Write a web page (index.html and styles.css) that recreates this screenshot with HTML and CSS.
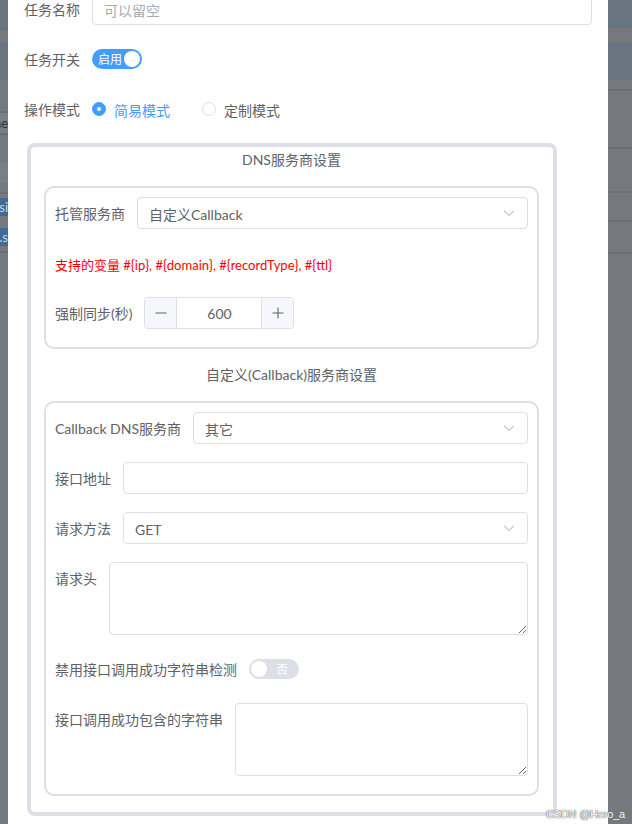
FILE: index.html
```html
<!DOCTYPE html>
<html lang="zh-CN">
<head>
<meta charset="utf-8">
<title>任务设置</title>
<link rel="stylesheet" href="styles.css">
</head>
<body>
<div class="screen">
  <div class="edge edge-left">
    <div class="band band-blue h28"></div>
    <div class="band band-line h2"></div>
    <div class="band band-gray h12"></div>
    <div class="band band-blue h38"></div>
    <div class="band band-gray h31"></div>
    <div class="band band-line h2"></div>
    <div class="band band-light h20"><span class="edge-text dark">ne</span></div>
    <div class="band band-line h2"></div>
    <div class="band band-gray h28"></div>
    <div class="band band-light h20"></div>
    <div class="band band-gray h9"></div>
    <div class="band band-line h2"></div>
    <div class="band band-gray h4"></div>
    <div class="band band-sel h18"><span class="edge-text">si</span></div>
    <div class="band band-gray h12"></div>
    <div class="band band-sel h18"><span class="edge-text">l.s</span></div>
    <div class="band band-gray h5"></div>
    <div class="band band-line h2"></div>
  </div>

  <div class="dialog">
    <div class="dialog-body">
      <div class="form top-form">
        <div class="item">
          <span class="label">任务名称</span>
          <div class="control">
            <input class="input" type="text" placeholder="可以留空">
          </div>
        </div>
        <div class="item">
          <span class="label">任务开关</span>
          <div class="control">
            <span class="switch is-on"><span class="switch-text">启用</span><span class="switch-knob"></span></span>
          </div>
        </div>
        <div class="item">
          <span class="label">操作模式</span>
          <div class="control">
            <span class="radio is-checked"><span class="radio-dot"></span><span class="radio-label">简易模式</span></span>
            <span class="radio"><span class="radio-dot"></span><span class="radio-label">定制模式</span></span>
          </div>
        </div>
      </div>

      <div class="group">
        <div class="group-title">DNS服务商设置</div>
        <div class="card">
          <div class="item">
            <span class="label">托管服务商</span>
            <div class="control">
              <div class="select"><span class="select-value">自定义Callback</span>
                <svg class="arrow" viewBox="0 0 1024 1024"><path fill="currentColor" d="M831.872 340.864 512 652.672 192.128 340.864a30.592 30.592 0 0 0-42.752 0 29.120 29.120 0 0 0 0 41.600L489.664 714.240a32 32 0 0 0 44.672 0l340.288-331.712a29.120 29.120 0 0 0 0-41.728 30.592 30.592 0 0 0-42.752 0z"/></svg>
              </div>
            </div>
          </div>
          <div class="item">
            <div class="control hint">支持的变量 #{ip}, #{domain}, #{recordType}, #{ttl}</div>
          </div>
          <div class="item">
            <span class="label">强制同步(秒)</span>
            <div class="control">
              <div class="number">
                <span class="num-btn num-dec"><svg viewBox="0 0 12 12"><path d="M0.5 6h11" stroke="currentColor" stroke-width="1.1"/></svg></span>
                <span class="num-value">600</span>
                <span class="num-btn num-inc"><svg viewBox="0 0 12 12"><path d="M0.5 6h11M6 0.5v11" stroke="currentColor" stroke-width="1.1"/></svg></span>
              </div>
            </div>
          </div>
        </div>

        <div class="group-title">自定义(Callback)服务商设置</div>
        <div class="card">
          <div class="item">
            <span class="label">Callback DNS服务商</span>
            <div class="control">
              <div class="select"><span class="select-value">其它</span>
                <svg class="arrow" viewBox="0 0 1024 1024"><path fill="currentColor" d="M831.872 340.864 512 652.672 192.128 340.864a30.592 30.592 0 0 0-42.752 0 29.120 29.120 0 0 0 0 41.600L489.664 714.240a32 32 0 0 0 44.672 0l340.288-331.712a29.120 29.120 0 0 0 0-41.728 30.592 30.592 0 0 0-42.752 0z"/></svg>
              </div>
            </div>
          </div>
          <div class="item">
            <span class="label">接口地址</span>
            <div class="control">
              <input class="input" type="text">
            </div>
          </div>
          <div class="item">
            <span class="label">请求方法</span>
            <div class="control">
              <div class="select"><span class="select-value">GET</span>
                <svg class="arrow" viewBox="0 0 1024 1024"><path fill="currentColor" d="M831.872 340.864 512 652.672 192.128 340.864a30.592 30.592 0 0 0-42.752 0 29.120 29.120 0 0 0 0 41.600L489.664 714.240a32 32 0 0 0 44.672 0l340.288-331.712a29.120 29.120 0 0 0 0-41.728 30.592 30.592 0 0 0-42.752 0z"/></svg>
              </div>
            </div>
          </div>
          <div class="item">
            <span class="label">请求头</span>
            <div class="control">
              <textarea class="textarea"></textarea>
            </div>
          </div>
          <div class="item">
            <span class="label">禁用接口调用成功字符串检测</span>
            <div class="control">
              <span class="switch is-off"><span class="switch-knob"></span><span class="switch-text">否</span></span>
            </div>
          </div>
          <div class="item">
            <span class="label">接口调用成功包含的字符串</span>
            <div class="control">
              <textarea class="textarea"></textarea>
            </div>
          </div>
        </div>
      </div>
    </div>
  </div>

  <div class="edge edge-right">
    <div class="band band-blue h28"></div>
    <div class="band band-gray h14"></div>
    <div class="band band-blue h38"></div>
    <div class="band band-gray h9"></div>
    <div class="band band-line h2"></div>
    <div class="band band-gray h56"></div>
    <div class="band band-line h2"></div>
    <div class="band band-gray h42"></div>
    <div class="band band-line h2"></div>
    <div class="band band-gray h27"></div>
    <div class="band band-line h2"></div>
    <div class="band band-gray h30"></div>
    <div class="band band-line h2"></div>
  </div>

  <div class="watermark">CSDN @Hero_a</div>
</div>
</body>
</html>
```

FILE: styles.css
```css
* { box-sizing: border-box; }

html, body {
  margin: 0;
  padding: 0;
}

body {
  width: 632px;
  height: 824px;
  overflow: hidden;
  font-family: "Lato", "Noto Sans CJK SC", sans-serif;
  font-size: 14px;
  color: #606266;
}

.screen {
  position: relative;
  display: flex;
  width: 632px;
  height: 824px;
  background: #75787d;
}

/* dimmed page behind the dialog */
.edge {
  display: flex;
  flex-direction: column;
  overflow: hidden;
}
.edge-left { width: 8px; flex: none; }
.edge-right { flex: 1; }

.band { flex: none; position: relative; overflow: hidden; }
.band-blue { background: #687580; }
.band-gray { background: #75787d; }
.band-line { background: #6b6e72; }
.band-light { background: #7b7e82; }
.band-sel { background: #3f6b96; }
.h2 { height: 2px; } .h4 { height: 4px; } .h5 { height: 5px; } .h9 { height: 9px; }
.h12 { height: 12px; } .h14 { height: 14px; } .h18 { height: 18px; }
.h20 { height: 20px; } .h27 { height: 27px; } .h28 { height: 28px; } .h30 { height: 30px; }
.h31 { height: 31px; } .h38 { height: 38px; } .h42 { height: 42px; } .h56 { height: 56px; }

.edge-text {
  display: block;
  font-size: 13px;
  line-height: 18px;
  color: #c9d3de;
  white-space: nowrap;
  direction: rtl;
  text-align: right;
}
.edge-text.dark { color: #2f3133; line-height: 20px; }

/* dialog */
.dialog {
  width: 600px;
  flex: none;
  height: 824px;
  background: #fff;
  overflow: hidden;
}

.dialog-body {
  padding: 0 16px;
}

.top-form {
  margin-top: -7px;
}

.item {
  display: flex;
  align-items: flex-start;
  margin-bottom: 18px;
}

.label {
  flex: none;
  height: 32px;
  padding-top: 2px;
  line-height: 30px;
  padding-right: 12px;
  font-size: 14px;
  color: #606266;
  white-space: nowrap;
}

.control {
  flex: 1;
  min-width: 0;
  min-height: 32px;
  display: flex;
  align-items: center;
}

.input {
  width: 100%;
  height: 32px;
  border: 1px solid #dcdfe6;
  border-radius: 4px;
  padding: 2px 11px 0;
  font: inherit;
  font-size: 14px;
  color: #606266;
  outline: none;
  background: #fff;
}
.input::placeholder { color: #a8abb2; }

/* switch */
.switch {
  display: inline-flex;
  align-items: center;
  width: 50px;
  height: 20px;
  border-radius: 10px;
  padding: 0 2px;
}
.switch.is-on { background: #409eff; justify-content: space-between; padding-left: 6px; }
.switch.is-off { background: #dcdfe6; }
.switch-knob {
  width: 16px;
  height: 16px;
  border-radius: 50%;
  background: #fff;
  flex: none;
}
.switch-text {
  font-size: 12px;
  padding-top: 1px;
  line-height: 19px;
  color: #fff;
}
.switch.is-off .switch-text { flex: 1; text-align: center; }

/* radio */
.radio {
  display: inline-flex;
  align-items: center;
  margin-right: 32px;
}
.radio-dot {
  width: 14px;
  height: 14px;
  border-radius: 50%;
  border: 1px solid #dcdfe6;
  background: #fff;
  position: relative;
  flex: none;
}
.radio.is-checked .radio-dot {
  background: #409eff;
  border-color: #409eff;
}
.radio.is-checked .radio-dot::after {
  content: "";
  position: absolute;
  left: 4px;
  top: 4px;
  width: 4px;
  height: 4px;
  border-radius: 50%;
  background: #fff;
}
.radio-label {
  padding-left: 8px;
  padding-top: 2px;
  font-size: 14px;
  color: #606266;
}
.radio.is-checked .radio-label { color: #409eff; }

/* grouped settings */
.group {
  width: 530px;
  margin: 1px 0 0 3px;
  border: 4px solid #dcdfe6;
  border-radius: 8px;
  padding: 0 14px 16px 13px;
}

.group-title {
  height: 24px;
  padding-top: 2px;
  line-height: 22px;
  text-align: center;
  font-size: 14px;
  color: #606266;
  margin-bottom: 15px;
}

.card {
  border: 2px solid #dcdfe6;
  border-radius: 10px;
  padding: 9px 9px 0 9px;
  margin-bottom: 13px;
}
.card:last-child { margin-bottom: 0; }

.select {
  width: 100%;
  height: 32px;
  border: 1px solid #dcdfe6;
  border-radius: 4px;
  padding: 0 11px;
  display: flex;
  align-items: center;
  justify-content: space-between;
}
.select-value {
  font-size: 14px;
  padding-top: 2px;
  color: #606266;
}
.arrow {
  width: 14px;
  height: 14px;
  color: #a8abb2;
  flex: none;
}

.hint {
  height: 32px;
  padding-top: 2px;
  font-size: 13px;
  color: #ff0000;
  white-space: nowrap;
}

/* number input */
.number {
  width: 150px;
  height: 32px;
  border: 1px solid #dcdfe6;
  border-radius: 4px;
  display: flex;
  overflow: hidden;
}
.num-btn {
  width: 32px;
  flex: none;
  background: #f5f7fa;
  display: flex;
  align-items: center;
  justify-content: center;
  color: #606266;
}
.num-btn svg { width: 12px; height: 12px; }
.num-dec { border-right: 1px solid #dcdfe6; }
.num-inc { border-left: 1px solid #dcdfe6; }
.num-value {
  flex: 1;
  text-align: center;
  padding-top: 2px;
  line-height: 28px;
  font-size: 14px;
  color: #606266;
}

.textarea {
  display: block;
  width: 100%;
  height: 73px;
  border: 1px solid #dcdfe6;
  border-radius: 4px;
  padding: 5px 11px;
  font: inherit;
  color: #606266;
  resize: vertical;
  outline: none;
}

.watermark {
  position: absolute;
  right: 7px;
  bottom: 3px;
  font-family: "Liberation Sans", sans-serif;
  font-size: 11px;
  letter-spacing: -0.2px;
  line-height: 14px;
  color: #f4f4f4;
  text-shadow: 0 0 1px #7a7a7a, 0 0 1px #7a7a7a, 0 0 1px #7a7a7a;
  white-space: nowrap;
}
```
